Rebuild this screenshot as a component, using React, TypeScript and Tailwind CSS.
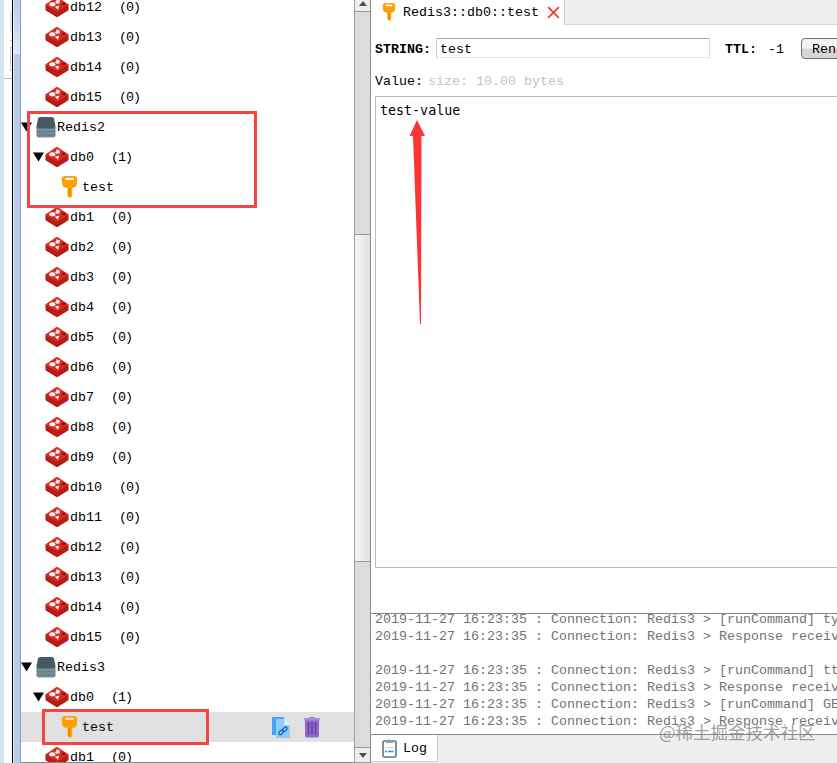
import React from "react";

function RedisIcon() {
  return (
    <svg width="24" height="22" viewBox="0 0 24 22" className="shrink-0">
      <path d="M.5 8.5 12 3l11.500 5.500v5q0 .7-.8 1.200L13 20.700q-1 .5-2 0L1.300 14.700q-.8-.5-.8-1.200Z" fill="#b01814" />
      <path d="M.7 8.200 11 1.300q1-.6 2 0l10.200 6.900q.6.6-.2 1.100L13 15.400q-1 .5-2 0L1 9.400q-.9-.6-.3-1.200Z" fill="#dc2a23" />
      <path d="M1 12 11 17.800q1 .5 2 0L23 12" fill="none" stroke="#c9211b" strokeWidth="1" />
      <ellipse cx="7.300" cy="8.300" rx="3" ry="2" fill="#fff" />
      <path d="m12 2.600.9 1.700 2.400-.1-1.200 1.700 1.100 1.500-2.200-.1-1.200 1.200-.5-1.700-2-.4 1.700-1Z" fill="#fff" />
      <path d="m9.800 10.500 4.400-.8-1.300 4Z" fill="#fff" />
      <path d="m16 8 3.800-2v3.700Z" fill="#7a0c0a" />
    </svg>
  );
}

function KeyIcon({ width = 17, height = 22 }: { width?: number; height?: number }) {
  return (
    <svg width={width} height={height} viewBox="0 0 17 22" className="shrink-0">
      <path fillRule="evenodd" fill="#ffa000" d="M4 0h9q3 0 3.3 3.2l-.5 5q-.4 3.2-3.8 3.5h-.8V20l-2.1 2-2.6-2v-8.3H5.2q-3.5-.3-4-3.5l-.5-5Q1 0 4 0Zm1.2 1.8q-1 0-1 1t1 1.1h6.7q1 0 1-1t-1-1.100Z" />
      <path d="M8.4 12.5v7.4" stroke="#d98200" strokeWidth="1.2" />
    </svg>
  );
}

function ServerIcon() {
  return (
    <svg width="20" height="21" viewBox="0 0 20 21" className="shrink-0">
      <path d="M4 0h12q1.5 0 2 1.5L19.5 9q0 2-1.500 2H2Q.5 11 .5 9L2 1.500Q2.500 0 4 0Z" fill="#455a64" />
      <path d="M.5 9.500q.3 1.500 2 1.500h15q1.700 0 2-1.500v9q0 2-2 2h-15q-2 0-2-2Z" fill="#78909c" />
      <path d="M.5 10.500q.5 1 2 1h15q1.500 0 2-1M.5 13.800q.5 1 2 1h15q1.500 0 2-1M.5 17q.5 1 2 1h15q1.500 0 2-1" fill="none" stroke="#546e7a" strokeWidth=".8" />
    </svg>
  );
}

function Caret() {
  return (
    <svg width="11" height="10" viewBox="0 0 11 10" className="shrink-0">
      <path d="M0 .5h11L5.500 9.500Z" fill="#000" />
    </svg>
  );
}

function CopyLinkIcon() {
  return (
    <svg width="18" height="21" viewBox="0 0 18 21">
      <path d="M0 0h12v18H0Z" fill="#42a5f5" />
      <path d="M4 2h8.500L18 8v13H4Z" fill="#90caf9" />
      <path d="M12.500 2v6H18Z" fill="#e1f5fe" />
      <g fill="none" stroke="#1565c0" strokeWidth="1.300">
        <rect x="6.500" y="13.800" width="5.500" height="3" rx="1.500" transform="rotate(-42 9.200 15.300)" />
        <rect x="10" y="10.900" width="5.500" height="3" rx="1.500" transform="rotate(-42 12.700 12.400)" />
      </g>
    </svg>
  );
}

function TrashIcon() {
  return (
    <svg width="16" height="21" viewBox="0 0 16 21">
      <path d="M5.500 1V.5h5V1" stroke="#9575cd" fill="none" />
      <path d="M1 3h14v15.500q0 2-2 2H3q-2 0-2-2Z" fill="#8e68c9" />
      <path d="M4.500 5v12.500M8 5v12.500M11.500 5v12.500" stroke="#6540ad" strokeWidth="1.500" />
      <rect y="1" width="16" height="2.500" rx="1" fill="#a98bdc" />
    </svg>
  );
}

function ClipboardIcon() {
  return (
    <svg width="15" height="19" viewBox="0 0 15 19" className="shrink-0">
      <rect x="1" y="2" width="13" height="16" rx="1.200" fill="#fff" stroke="#60747e" strokeWidth="1.600" />
      <path d="M4 4V2h2q0-1.700 1.500-1.700T9 2h2v2Z" fill="#90a4ae" />
      <path d="M3 8.500h2M6 8.500h5.500" stroke="#cfd8dc" />
      <path d="M3 12.500h2M6 12.500h5.500" stroke="#2196f3" strokeWidth="1.300" />
    </svg>
  );
}

function DbRow({ name, count = 0, open = false }: { name: string; count?: number; open?: boolean }) {
  return (
    <div className="flex h-[30px] shrink-0 items-center pl-3">
      <div className="flex w-3">{open && <Caret />}</div>
      <RedisIcon />
      <span className="ml-px pt-0.5">{name}</span>
      <span className="ml-[17px] pt-px tracking-[-1px]">{"(" + count + ")"}</span>
    </div>
  );
}

function ServerRow({ name }: { name: string }) {
  return (
    <div className="flex h-[30px] shrink-0 items-center">
      <Caret />
      <div className="ml-1 flex"><ServerIcon /></div>
      <span className="ml-px pt-0.5">{name}</span>
    </div>
  );
}

function KeyRow({ selected = false }: { selected?: boolean }) {
  return (
    <div className={selected ? "flex h-[30px] shrink-0 items-center bg-[#e1e1e1] pl-10" : "flex h-[30px] shrink-0 items-center pl-10"}>
      <KeyIcon />
      <span className="ml-1 pt-0.5">test</span>
      {selected && (
        <div className="mr-[34px] ml-auto flex gap-[14px]">
          <CopyLinkIcon />
          <TrashIcon />
        </div>
      )}
    </div>
  );
}

function ScrollBar() {
  return (
    <div className="flex w-[17px] shrink-0 flex-col border-r border-l border-r-[#8c8c8c] border-l-[#a0a0a0] bg-[#dcdcdc]">
      <div className="flex h-3 items-start justify-center border-b border-[#999] bg-[#eee] pt-px">
        <svg width="8" height="5"><path d="M4 0 8 5H0Z" fill="#505050" /></svg>
      </div>
      <div className="mt-[222px] h-[328px] border-y border-[#999] bg-linear-to-r from-[#f5f5f5] to-[#e2e2e2]" />
      <div className="mt-auto flex h-4 items-center justify-center border-y border-[#999] bg-[#eee]">
        <svg width="8" height="5"><path d="M0 0h8L4 5Z" fill="#505050" /></svg>
      </div>
    </div>
  );
}

const lastDbs = ["db12", "db13", "db14", "db15"];
const allDbs = Array.from({ length: 15 }, (_, i) => "db" + (i + 1));
const stamp = "2019-11-27 16:23:35 : Connection: Redis3 > ";
const log = [
  stamp + "[runCommand] type test",
  stamp + "Response received : string",
  "",
  stamp + "[runCommand] ttl test",
  stamp + "Response received : -1",
  stamp + "[runCommand] GET test",
  stamp + "Response received : test-value",
];

export default function App() {
  return (
    <div className="relative flex h-[763px] w-[837px] overflow-hidden bg-white font-['Liberation_Mono','Noto_Sans_CJK_SC',monospace] text-[13.33px] leading-4 text-black">
      <div className="w-1 shrink-0 bg-[#d4e4f1]" />
      <div className="flex w-2 shrink-0 flex-col">
        <div className="flex h-[79px] flex-col items-end border-b border-[#bbb]">
          <div className="mt-[11px] h-5 w-0.5 bg-[#dce8f3]" />
          <div className="mt-[9px] h-px w-0.5 bg-[#bbb]" />
          <div className="mt-[6px] h-6 w-0.5 border border-r-0 border-[#ccc]" />
        </div>
      </div>
      <div className="w-0.5 shrink-0 border-l border-black bg-[#e8eef6]" />
      <div className="w-[7px] shrink-0 border-r border-[#8b9bb0] bg-[#b9cdea]">
        <div className="h-[54px] bg-linear-to-b from-[#b9cdea] to-[#e1eaf6]" />
      </div>

      <div className="flex w-[333px] shrink-0 flex-col overflow-hidden border-b border-[#888]">
        <div className="-mt-2 flex shrink-0 flex-col">
          {lastDbs.map((n) => <DbRow key={n} name={n} />)}
          <ServerRow name="Redis2" />
          <DbRow name="db0" count={1} open />
          <KeyRow />
          {allDbs.map((n) => <DbRow key={n} name={n} />)}
          <ServerRow name="Redis3" />
          <DbRow name="db0" count={1} open />
          <KeyRow selected />
          <DbRow name="db1" />
        </div>
      </div>
      <ScrollBar />

      <div className="flex min-w-0 flex-1 flex-col">
        <div className="flex h-[25px] shrink-0">
          <div className="flex w-[194px] shrink-0 items-center border-r border-[#ccc] pl-[11px]">
            <div className="-mt-px"><KeyIcon width={14} height={18} /></div>
            <span className="ml-[7px] pt-px">Redis3::db0::test</span>
            <svg className="ml-2" width="13" height="13" viewBox="0 0 12 12"><path d="m1 1 10 10M11 1 1 11" stroke="#ee4035" strokeWidth="1.700" /></svg>
          </div>
          <div className="flex-1 border-b border-[#d9d9d9] bg-[#efefef]" />
        </div>
        <div className="flex h-[47px] shrink-0 items-center pb-px pl-1">
          <b className="w-[61px] shrink-0 pt-1">STRING:</b>
          <div className="flex h-5 w-[274px] shrink-0 items-center border border-t-[#aaa] border-r-[#ddd] border-b-[#e6e6e6] border-l-[#ccc] pt-1 pl-[3px]">test</div>
          <b className="ml-[15px] w-[43px] shrink-0 pt-1 whitespace-nowrap">TTL:</b>
          <span className="w-[33px] shrink-0 pt-1">-1</span>
          <div className="flex h-[21px] w-24 shrink-0 items-center rounded-sm border border-[#707070] bg-linear-to-b from-[#f3f3f3] from-45% to-[#d6d6d6] to-55% pt-1 pl-[10px]">Rename</div>
        </div>
        <div className="flex h-6 shrink-0 gap-[5px] pt-0.5 pl-1">
          <span>Value:</span>
          <span className="text-[#c4c4c4]">size: 10.00 bytes</span>
        </div>
        <div className="ml-1 h-[472px] shrink-0 border border-r-0 border-[#bcbcbc] pt-[6px] pl-1 font-['DejaVu_Sans_Mono',monospace]">test-value</div>
        <div className="mt-[45px] h-[122px] shrink-0 overflow-hidden border-y border-[#888] pl-1 text-[#737373]">
          <div className="-mt-[3px]">
            {log.map((line, i) => <div key={i} className="h-[17px] leading-[17px] whitespace-pre">{line}</div>)}
          </div>
        </div>
        <div className="flex flex-1 bg-[#efefef]">
          <div className="mb-px flex w-[67px] items-center gap-[6px] border-r border-b border-[#d0d0d0] bg-white pl-[11px]">
            <ClipboardIcon />
            <span className="pt-px">Log</span>
          </div>
        </div>
      </div>

      <div className="absolute top-[111px] left-[27px] h-[97px] w-[230px] border-[3px] border-[#f24545]" />
      <div className="absolute top-[709px] left-[42px] h-9 w-[167px] border-[3px] border-[#f24545]" />
      <svg className="absolute top-[120px] left-[409px]" width="17" height="205"><path d="M8 0 16 16h-3.500L12 204h-1L4 16H.5Z" fill="#fc3434" /></svg>
      <div className="absolute top-[720px] left-[659px] font-['Noto_Sans_CJK_SC',sans-serif] text-[17.500px] leading-6 whitespace-nowrap text-[#888]/80">@稀土掘金技术社区</div>
    </div>
  );
}
